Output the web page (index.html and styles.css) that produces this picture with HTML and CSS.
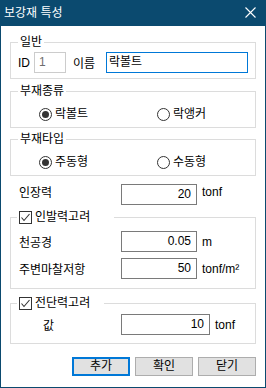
FILE: index.html
```html
<!DOCTYPE html>
<html lang="ko">
<head>
  <meta charset="UTF-8" />
  <meta name="viewport" content="width=device-width, initial-scale=1.0"/>
  <title>보강재 특성</title>
  <link rel="stylesheet" href="styles.css">
</head>
<body>

<div class="window">
  <div class="titlebar">
    <span class="title">보강재 특성</span>
    <svg class="close" width="11" height="11" viewBox="0 0 11 11">
      <path d="M0.5 0.5 L10.5 10.5 M10.5 0.5 L0.5 10.5" stroke="#fff" stroke-width="1.1" fill="none"/>
    </svg>
  </div>

  <div class="content">
    <fieldset class="group g-general">
      <legend>일반</legend>
      <div class="row-general">
        <span class="lbl-id">ID</span>
        <span class="box box-id">1</span>
        <span class="lbl-name">이름</span>
        <span class="box box-name">락볼트</span>
      </div>
    </fieldset>

    <fieldset class="group g-radio g-kind">
      <legend>부재종류</legend>
      <div class="radios">
        <span class="radio-item"><span class="radio checked"></span>락볼트</span>
        <span class="radio-item"><span class="radio"></span>락앵커</span>
      </div>
    </fieldset>

    <fieldset class="group g-radio g-type">
      <legend>부재타입</legend>
      <div class="radios">
        <span class="radio-item"><span class="radio checked"></span>주동형</span>
        <span class="radio-item"><span class="radio"></span>수동형</span>
      </div>
    </fieldset>

    <div class="field field-top">
      <span class="lbl raised">인장력</span>
      <span class="box value">20</span>
      <span class="unit raised">tonf</span>
    </div>

    <fieldset class="group g-pull">
      <legend class="check-legend pull-legend">
        <svg class="check" width="13" height="13" viewBox="0 0 13 13">
          <rect x="0.5" y="0.5" width="12" height="12" fill="#fff" stroke="#333"/>
          <path d="M2.5 6.5 L5 9.5 L10.5 3" stroke="#333" stroke-width="1.1" fill="none"/>
        </svg>
        <span>인발력고려</span>
      </legend>
      <div class="field">
        <span class="lbl">천공경</span>
        <span class="box value">0.05</span>
        <span class="unit">m</span>
      </div>
      <div class="field field-second">
        <span class="lbl">주변마찰저항</span>
        <span class="box value">50</span>
        <span class="unit">tonf/m²</span>
      </div>
    </fieldset>

    <fieldset class="group g-shear">
      <legend class="check-legend shear-legend">
        <svg class="check" width="13" height="13" viewBox="0 0 13 13">
          <rect x="0.5" y="0.5" width="12" height="12" fill="#fff" stroke="#333"/>
          <path d="M2.5 6.5 L5 9.5 L10.5 3" stroke="#333" stroke-width="1.1" fill="none"/>
        </svg>
        <span>전단력고려</span>
      </legend>
      <div class="field">
        <span class="lbl lbl-indent">값</span>
        <span class="box value wide">10</span>
        <span class="unit">tonf</span>
      </div>
    </fieldset>

    <div class="buttons">
      <button class="btn default">추가</button>
      <button class="btn">확인</button>
      <button class="btn">닫기</button>
    </div>
  </div>
</div>

</body>
</html>
```

FILE: styles.css
```css
body {
  margin: 0;
  font-family: "Liberation Sans", "Noto Sans CJK KR", sans-serif;
  font-size: 12px;
  color: #000;
  background: #fff;
}

.window {
  width: 266px;
  height: 388px;
  box-sizing: border-box;
  border: 1px solid #0b4a6f;
  background: #fff;
}

.titlebar {
  height: 25px;
  background: #0b4a6f;
  display: flex;
  align-items: center;
  justify-content: space-between;
  padding: 0 9px 0 3px;
  color: #fff;
}

.title {
  line-height: 14px;
  padding-bottom: 1px;
}

.close {
  display: block;
  margin-bottom: 2px;
}

.content {
  padding: 0 9px;
}

/* group boxes */
.group {
  margin: 0;
  padding: 0;
  border: 1px solid #dcdcdc;
  min-width: 0;
}

.group legend {
  margin-left: 7px;
  padding: 0 2px;
  height: 13px;
  line-height: 13px;
}

.g-general {
  margin-top: 10px;
  padding: 3px 0 5px;
}

.g-kind {
  margin-top: 6px;
}

.g-type {
  margin-top: 5px;
}

.g-radio {
  padding: 10px 0 6px;
}

.g-pull {
  margin-top: 6px;
  padding: 7px 0 9px;
}

.g-shear {
  margin-top: 8px;
  padding: 4px 0 8px;
}

/* first group */
.row-general {
  display: flex;
  align-items: center;
  padding-left: 7px;
  height: 21px;
}

.lbl-id {
  width: 16px;
  flex: none;
}

.lbl-name {
  width: 33px;
  margin-left: 7px;
  flex: none;
}

.box {
  box-sizing: border-box;
  height: 21px;
  line-height: 19px;
  border: 1px solid #7a7a7a;
  background: #fff;
  flex: none;
}

.box-id {
  width: 32px;
  border-color: #cccccc;
  color: #6d6d6d;
  padding-left: 4px;
}

.box-name {
  width: 142px;
  border-color: #0078d7;
  padding-left: 2px;
}

/* radio buttons */
.radios {
  display: flex;
  padding-left: 28px;
  height: 13px;
}

.radio-item {
  width: 118px;
  flex: none;
  display: flex;
  align-items: center;
  gap: 3px;
  line-height: 13px;
}

.radio {
  width: 13px;
  height: 13px;
  box-sizing: border-box;
  border: 1px solid #333;
  border-radius: 50%;
  display: flex;
  align-items: center;
  justify-content: center;
  flex: none;
}

.radio.checked::after {
  content: "";
  width: 7px;
  height: 7px;
  border-radius: 50%;
  background: #333;
}

/* checkbox legends */
.check-legend {
  display: flex;
  align-items: center;
  gap: 3px;
  box-sizing: border-box;
  margin-left: 6px !important;
}

.pull-legend {
  width: 97px;
}

.shear-legend {
  width: 87px;
}

.check {
  display: block;
  flex: none;
}

/* value rows */
.field {
  display: flex;
  align-items: center;
  padding-left: 8px;
  height: 21px;
}

.field-top {
  margin-top: 8px;
  padding-left: 9px;
}

.field-second {
  margin-top: 6px;
}

.lbl {
  width: 102px;
  flex: none;
}

.lbl-indent {
  box-sizing: border-box;
  padding-left: 24px;
}

.raised {
  padding-bottom: 6px;
}

.value {
  width: 76px;
  text-align: right;
  padding-right: 5px;
}

.value.wide {
  width: 89px;
}

.unit {
  margin-left: 5px;
}

/* buttons */
.buttons {
  display: flex;
  justify-content: flex-end;
  gap: 5px;
  margin-top: 13px;
}

.btn {
  width: 58px;
  height: 19px;
  padding: 0;
  font: inherit;
  line-height: 15px;
  background: #e1e1e1;
  border: 1px solid #adadad;
  color: #000;
}

.btn.default {
  border: 2px solid #0078d7;
}
```
